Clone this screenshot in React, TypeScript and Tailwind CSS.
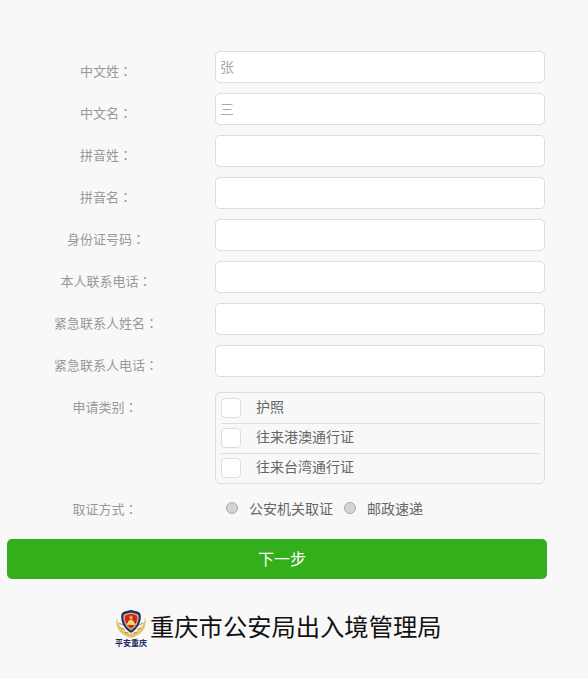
const textFields = [
  { label: "中文姓", placeholder: "张" },
  { label: "中文名", placeholder: "三" },
  { label: "拼音姓", placeholder: "" },
  { label: "拼音名", placeholder: "" },
  { label: "身份证号码", placeholder: "" },
  { label: "本人联系电话", placeholder: "" },
  { label: "紧急联系人姓名", placeholder: "" },
  { label: "紧急联系人电话", placeholder: "" },
];

const docTypes = ["护照", "往来港澳通行证", "往来台湾通行证"];

// full width colon sits in the middle of its box in the TC font
function Colon() {
  return <span className="font-['Noto_Sans_CJK_TC']">：</span>;
}

function Badge() {
  return (
    <div className="flex w-[34px] flex-col items-center">
      <svg width="32" height="28" viewBox="0 0 32 28">
        <path d="M2 8C-1 18 6 25 16 28C26 25 33 18 30 8C29 16 23 22 16 24C9 22 3 16 2 8Z" fill="#e3c26a" />
        <path d="M4 13L8 15M6 18L10 19.500M10 22.500L13.500 23M28 13L24 15M26 18L22 19.500M22 22.500L18.500 23" stroke="#b48d34" strokeWidth="1" />
        <path d="M16 0C20 1 24 1 25.500 4C27 11 23 19 16 23C9 19 5 11 6.500 4C8 1 12 1 16 0Z" fill="#1c2a7c" />
        <path d="M16 2.500C19 3 22 3.500 23.500 5C24.500 11 21.500 17 16 20.500C10.500 17 7.500 11 8.500 5C10 3.500 13 3 16 2.500Z" fill="#d8b24a" />
        <path d="M16 4C18.500 4.300 21 4.800 22 6C22.800 11 20.500 15.500 16 18.500C11.500 15.500 9.200 11 10 6C11 4.800 13.500 4.300 16 4Z" fill="#d3222a" />
        <path d="M12 13H20V15H12ZM13 11H19V13H13ZM14.500 9.500H17.500V11H14.500Z" fill="#f2d873" />
        <path d="M16 5L16.600 6.700H18.300L16.900 7.700L17.400 9.300L16 8.300L14.600 9.300L15.100 7.700L13.700 6.700H15.400Z" fill="#f6dc62" />
      </svg>
      <span className="text-[8px] leading-[11px] font-bold whitespace-nowrap text-[#1d2a60]">平安重庆</span>
    </div>
  );
}

export default function App() {
  return (
    <div className="min-h-[679px] bg-[#f8f8f8] pt-[51px] font-['Liberation_Sans','Noto_Sans_CJK_SC',sans-serif]">
      <div className="flex flex-col gap-[10px]">
        {textFields.map((f) => (
          <div key={f.label} className="flex">
            <label className="w-[212px] pt-[11px] text-center text-[13px] leading-[18px] text-[#999]">
              {f.label}
              <Colon />
            </label>
            <input
              placeholder={f.placeholder}
              className="ml-[3px] h-[32px] w-[330px] rounded-[5px] border border-[#ddd] bg-white px-[4px] text-[14px] placeholder:text-[#aaa]"
            />
          </div>
        ))}
      </div>

      <div className="mt-[15px] flex">
        <div className="w-[210px] pt-[6px] text-center text-[13px] leading-[18px] text-[#999]">
          申请类别
          <Colon />
        </div>
        <div className="ml-[5px] h-[92px] w-[330px] rounded-[5px] border border-[#ddd] bg-[#f8f8f8] px-[5px]">
          {docTypes.map((d, i) => (
            <div
              key={d}
              className={`flex items-start ${i === 0 ? "h-[31px] pt-[5px]" : "h-[30px] pt-[4px]"} ${i < 2 ? "border-b border-[#ddd]" : ""}`}
            >
              <span className="h-[20px] w-[20px] rounded-[4px] border border-[#ddd] bg-white" />
              <span className="ml-[15px] text-[14px] leading-[19px] text-[#666]">{d}</span>
            </div>
          ))}
        </div>
      </div>

      <div className="mt-[15px] flex h-[20px] items-center">
        <div className="w-[210px] text-center text-[13px] text-[#999]">
          取证方式
          <Colon />
        </div>
        <span className="mb-[3px] ml-[16px] h-[12px] w-[12px] rounded-full border border-[#aaa] bg-[#d4d4d4]" />
        <span className="ml-[11px] text-[14px] text-[#666]">公安机关取证</span>
        <span className="mb-[3px] ml-[11px] h-[12px] w-[12px] rounded-full border border-[#aaa] bg-[#d4d4d4]" />
        <span className="ml-[11px] text-[14px] text-[#666]">邮政速递</span>
      </div>

      <button className="mx-[7px] mt-[20px] block h-[40px] w-[540px] rounded-[5px] bg-[#33af1b] pt-[2px] pl-[10px] text-[16px] text-white">
        下一步
      </button>

      <div className="mt-[31px] flex items-start pl-[114px]">
        <Badge />
        <span className="mt-[2px] ml-[2px] text-[24.3px] leading-[32px] whitespace-nowrap text-[#111]">
          重庆市公安局出入境管理局
        </span>
      </div>
    </div>
  );
}
